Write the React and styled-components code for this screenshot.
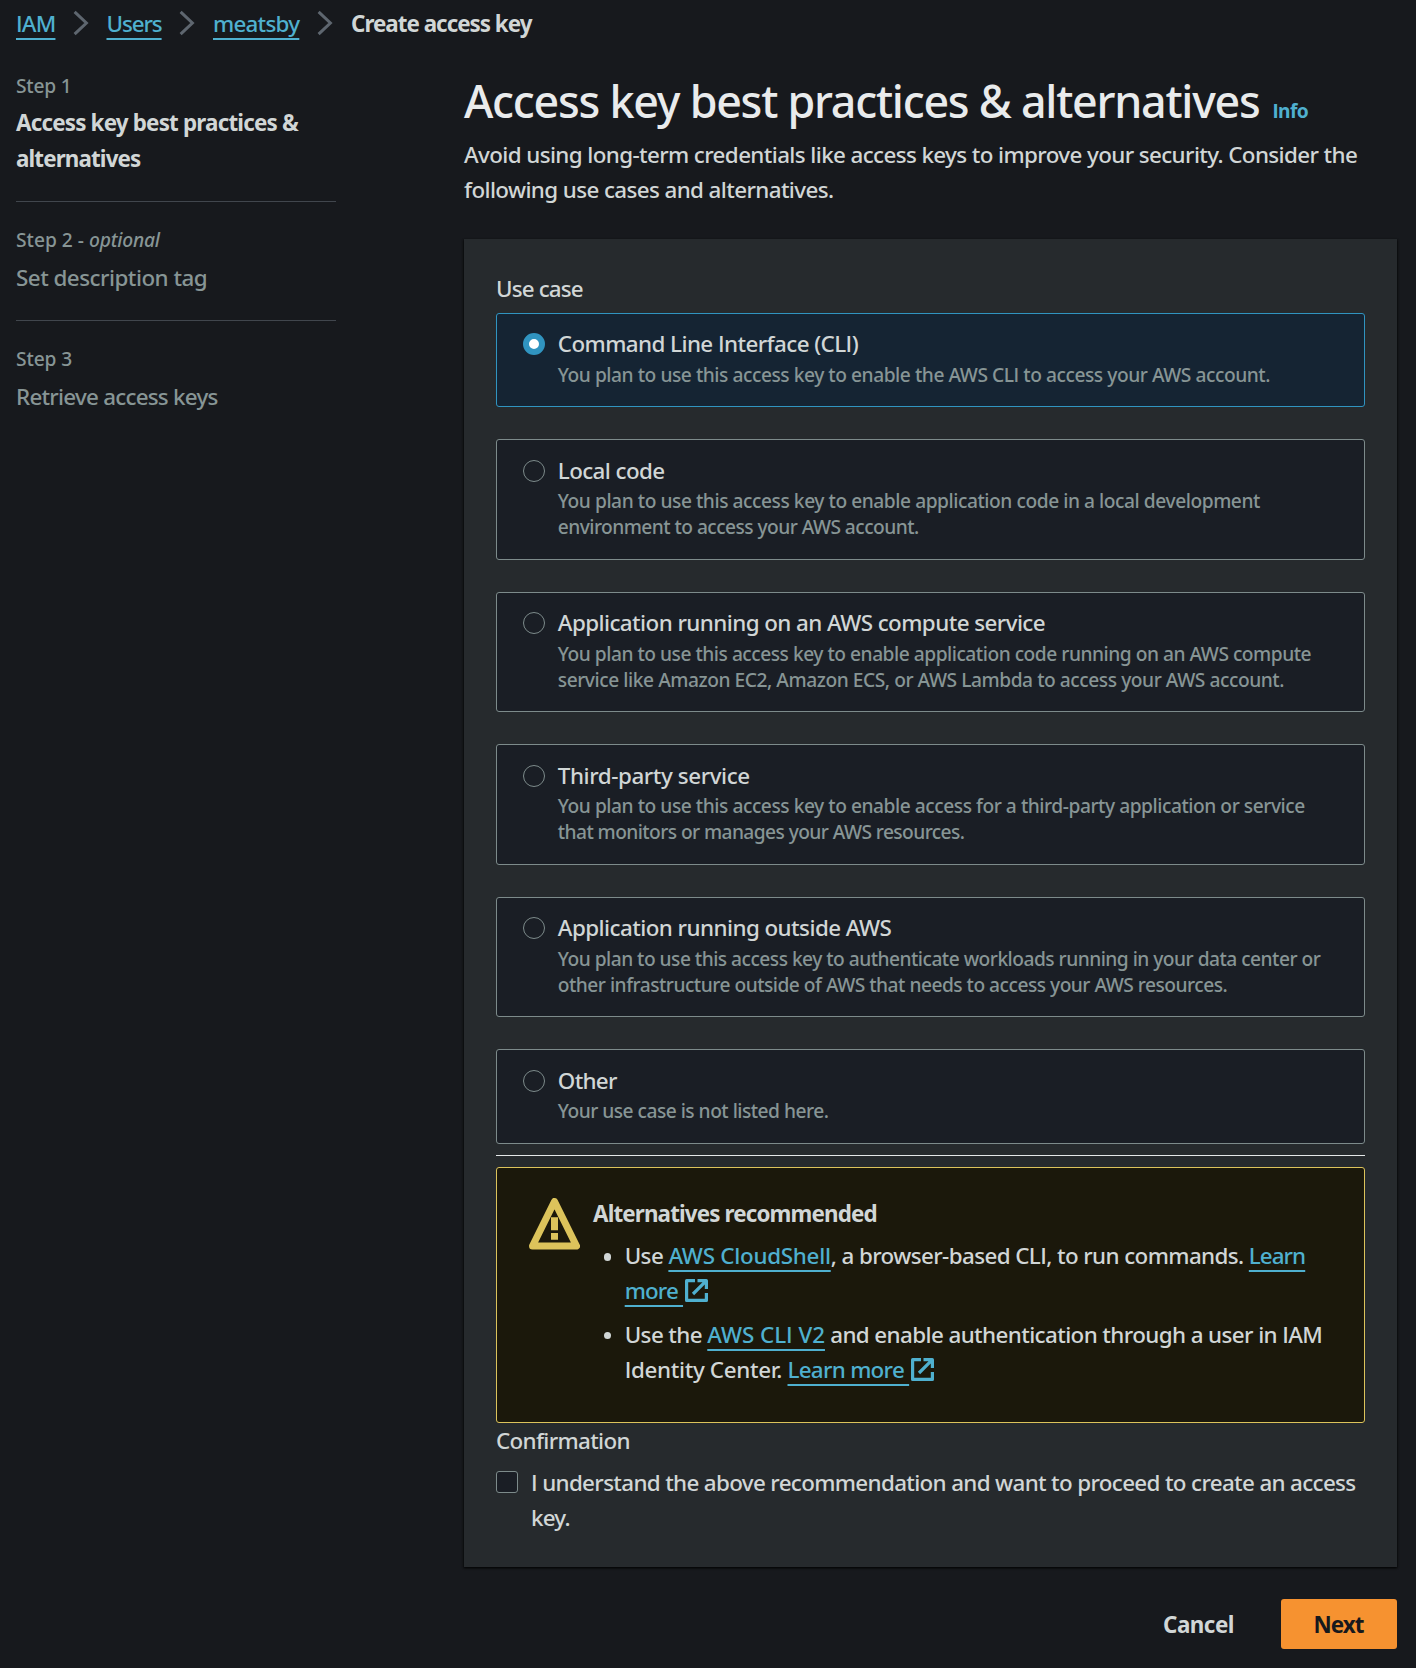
import React, { useState } from 'react';
import styled, { createGlobalStyle } from 'styled-components';

const color = {
  page: '#17191d',
  container: '#262a2d',
  control: '#1a1e25',
  selected: '#152433',
  accent: '#3094c0',
  link: '#4fb0cf',
  text: '#d1d6d6',
  heading: '#e9ebec',
  muted: '#879595',
  border: '#7d8b8b',
  divider: '#41464d',
  chevron: '#5e666f',
  warning: '#dcc35b',
  warningBg: '#1b180b',
  primary: '#f69230',
};

const GlobalStyle = createGlobalStyle`
  * { box-sizing: border-box; }
  body {
    margin: 0;
    background: ${color.page};
    color: ${color.text};
    font-family: "Noto Sans", "Open Sans", sans-serif;
    font-feature-settings: "ss04";
    font-size: 22.4px;
    font-weight: 500;
    line-height: 35.2px;
    -webkit-font-smoothing: antialiased;
  }
`;

const Page = styled.div`
  width: 1416px;
  min-height: 1668px;
  padding: 6.3px 19px 0 16px;
`;

const T = styled.span`
  letter-spacing: ${(p) => p.$ls}px;
  white-space: nowrap;
`;

const Line = styled(T)`
  display: block;
`;

const Link = styled.a`
  color: ${color.link};
  text-decoration: underline;
  text-decoration-thickness: 2px;
  text-underline-offset: 6px;
  text-decoration-skip-ink: none;
  letter-spacing: ${(p) => p.$ls}px;
  white-space: nowrap;
  cursor: pointer;
`;

const Breadcrumbs = styled.nav`
  display: flex;
  align-items: center;
  height: 35.2px;
`;

const Crumb = styled.span`
  display: flex;
  width: ${(p) => p.$w}px;
`;

const ChevronIcon = styled.svg`
  width: 16px;
  height: 26px;
  margin: 0 ${(p) => p.$r}px 1.4px 17px;
  fill: none;
  stroke: ${color.chevron};
  stroke-width: 3;
`;

const Columns = styled.div`
  display: grid;
  grid-template-columns: 320px 933px;
  column-gap: 128px;
`;

const Steps = styled.ol`
  list-style: none;
  margin: 0;
  padding: 31.6px 0 0;
`;

const Step = styled.li`
  padding-bottom: 25.4px;
  & + & {
    border-top: 1px solid ${color.divider};
    padding-top: 25px;
  }
`;

const StepLabel = styled.div`
  font-size: 19.2px;
  line-height: 25.6px;
  color: ${color.muted};
  margin-bottom: 6.8px;
`;

const StepTitle = styled.div`
  font-weight: ${(p) => (p.$active ? 700 : 500)};
  color: ${(p) => (p.$active ? color.text : color.muted)};
`;

const Main = styled.main`
  padding-top: 32px;
`;

const Header = styled.header`
  margin-bottom: 31.6px;
`;

const Title = styled.h1`
  margin: 0;
  height: 63.4px;
  font-size: 44.8px;
  line-height: 56px;
  font-weight: 500;
  color: ${color.heading};
  display: flex;
  align-items: baseline;
`;

const InfoLink = styled.a`
  margin-left: 13px;
  font-size: 19.2px;
  line-height: 24px;
  font-weight: 700;
  letter-spacing: -0.6px;
  color: ${color.link};
`;

const Container = styled.section`
  height: 1328px;
  padding: 31.7px 32px 0;
  background: ${color.container};
  box-shadow: 0 1px 2px rgba(0, 0, 0, 0.6), 1px 1px 2px rgba(0, 0, 0, 0.35), -1px 1px 2px rgba(0, 0, 0, 0.35);
`;

const FieldLabel = styled.div``;

const Tiles = styled.div`
  display: flex;
  flex-direction: column;
  gap: 32px;
  margin-top: 7px;
`;

const Tile = styled.label`
  display: flex;
  gap: 12.4px;
  height: ${(p) => (p.$lines > 1 ? 120.5 : 94.5)}px;
  padding: 12.5px 26px 0;
  border: 1px solid ${(p) => (p.$selected ? color.accent : color.border)};
  border-radius: 3px;
  background: ${(p) => (p.$selected ? color.selected : color.control)};
  cursor: pointer;
`;

const Radio = styled.span`
  flex: none;
  width: 22.4px;
  height: 22.4px;
  margin-top: 6.8px;
  border-radius: 50%;
  border: ${(p) => (p.$selected ? `6.7px solid ${color.accent}` : `1.6px solid ${color.border}`)};
  background: ${(p) => (p.$selected ? '#fff' : color.control)};
`;

const TileDescription = styled.div`
  margin-top: 0.5px;
  font-size: 19.2px;
  line-height: 25.6px;
  color: ${color.muted};
`;

const Rule = styled.hr`
  height: 1px;
  margin: 11px 0;
  border: 0;
  background: #e4e7e8;
`;

const Alert = styled.div`
  display: flex;
  height: 256px;
  padding: 27.8px 31px 0 32px;
  border: 1px solid ${color.warning};
  border-radius: 3px;
  background: ${color.warningBg};
`;

const WarningIcon = styled.svg`
  flex: none;
  width: 51px;
  height: 52px;
  margin: 2.2px 13px 0 0;
`;

const AlertTitle = styled.div`
  font-weight: 700;
`;

const AlertList = styled.ul`
  list-style: none;
  margin: 7px 0 0;
  padding: 0 0 0 10.5px;
  display: flex;
  flex-direction: column;
  gap: 8.4px;
`;

const AlertItem = styled.li`
  display: flex;
  gap: 13.8px;
`;

const Bullet = styled.span`
  flex: none;
  width: 7.4px;
  height: 7.4px;
  margin-top: 15.4px;
  border-radius: 50%;
  background: ${color.text};
`;

const ExternalIcon = styled.svg`
  width: 23px;
  height: 23px;
  margin-left: 2.3px;
  vertical-align: -3px;
  fill: none;
  stroke: ${color.link};
  stroke-width: 3.2;
`;

const CheckRow = styled.label`
  display: flex;
  gap: 13px;
  margin-top: 6.8px;
  cursor: pointer;
`;

const Checkbox = styled.span`
  flex: none;
  width: 22px;
  height: 22px;
  margin-top: 6.1px;
  border: 1.6px solid ${color.border};
  border-radius: 3px;
  background: ${color.control};
`;

const Actions = styled.footer`
  display: flex;
  justify-content: flex-end;
  padding-top: 32px;
`;

const Button = styled.button`
  height: 50px;
  width: ${(p) => p.$w}px;
  padding: 2px 1px 0 0;
  border: 0;
  border-radius: 3px;
  background: ${(p) => (p.$primary ? color.primary : 'transparent')};
  color: ${(p) => (p.$primary ? '#17191d' : color.text)};
  font: inherit;
  font-weight: 700;
  letter-spacing: ${(p) => p.$ls}px;
`;

const Chevron = ({ r }) => (
  <ChevronIcon viewBox="0 0 16 26" $r={r}>
    <path d="M1.6 1.8 13.4 13 1.6 24.2" />
  </ChevronIcon>
);

const External = () => (
  <ExternalIcon viewBox="0 0 23 23">
    <path d="M10 1.7H1.6v19.7h19.8V14M12.5 1.7h8.9V10M21.4 1.7 8 15" strokeLinejoin="round" />
  </ExternalIcon>
);

const USE_CASES = [
  { title: ['Command Line Interface (CLI)', -0.575], lines: [['You plan to use this access key to enable the AWS CLI to access your AWS account.', -0.46]] },
  { title: ['Local code', -0.6], lines: [['You plan to use this access key to enable application code in a local development', -0.455], ['environment to access your AWS account.', -0.555]] },
  { title: ['Application running on an AWS compute service', -0.571], lines: [['You plan to use this access key to enable application code running on an AWS compute', -0.488], ['service like Amazon EC2, Amazon ECS, or AWS Lambda to access your AWS account.', -0.455]] },
  { title: ['Third-party service', -0.427], lines: [['You plan to use this access key to enable access for a third-party application or service', -0.463], ['that monitors or manages your AWS resources.', -0.586]] },
  { title: ['Application running outside AWS', -0.559], lines: [['You plan to use this access key to authenticate workloads running in your data center or', -0.525], ['other infrastructure outside of AWS that needs to access your AWS resources.', -0.51]] },
  { title: ['Other', -0.7], lines: [['Your use case is not listed here.', -0.52]] },
];

export default function App() {
  const [selected, setSelected] = useState(0);
  return (
    <>
      <GlobalStyle />
      <Page>
        <Breadcrumbs>
          <Crumb $w={39.7}><Link $ls={-0.8}>IAM</Link></Crumb>
          <Chevron r={17.8} />
          <Crumb $w={55.5}><Link $ls={-1.1}>Users</Link></Crumb>
          <Chevron r={18} />
          <Crumb $w={86.7}><Link $ls={-0.75}>meatsby</Link></Crumb>
          <Chevron r={18.4} />
          <T as="b" $ls={-1}>Create access key</T>
        </Breadcrumbs>
        <Columns>
          <Steps>
            <Step>
              <StepLabel><T $ls={-0.2}>Step 1</T></StepLabel>
              <StepTitle $active>
                <Line $ls={-0.81}>Access key best practices &amp;</Line>
                <Line $ls={-0.88}>alternatives</Line>
              </StepTitle>
            </Step>
            <Step>
              <StepLabel><T $ls={0}>Step 2 - </T><T as="i" $ls={-0.2}>optional</T></StepLabel>
              <StepTitle><T $ls={-0.52}>Set description tag</T></StepTitle>
            </Step>
            <Step>
              <StepLabel><T $ls={-0.1}>Step 3</T></StepLabel>
              <StepTitle><T $ls={-0.76}>Retrieve access keys</T></StepTitle>
            </Step>
          </Steps>
          <Main>
            <Header>
              <Title>
                <T $ls={-1.251}>Access key best practices &amp; alternatives</T>
                <InfoLink>Info</InfoLink>
              </Title>
              <Line $ls={-0.615}>Avoid using long-term credentials like access keys to improve your security. Consider the</Line>
              <Line $ls={-0.611}>following use cases and alternatives.</Line>
            </Header>
            <Container>
              <FieldLabel><T $ls={-0.86}>Use case</T></FieldLabel>
              <Tiles>
                {USE_CASES.map(({ title, lines }, i) => (
                  <Tile key={title[0]} $selected={i === selected} $lines={lines.length} onClick={() => setSelected(i)}>
                    <Radio $selected={i === selected} />
                    <div>
                      <Line $ls={title[1]}>{title[0]}</Line>
                      <TileDescription>
                        {lines.map(([text, ls]) => <Line key={text} $ls={ls}>{text}</Line>)}
                      </TileDescription>
                    </div>
                  </Tile>
                ))}
              </Tiles>
              <Rule />
              <Alert>
                <WarningIcon viewBox="0 0 51 52">
                  <path d="M25.5 3.5 47.5 48H3.5Z" fill="none" stroke={color.warning} strokeWidth="7" strokeLinejoin="round" />
                  <path d="M22 19.3h7v13h-7zM22 35h7v6.7h-7z" fill={color.warning} />
                </WarningIcon>
                <div>
                  <AlertTitle><T $ls={-0.866}>Alternatives recommended</T></AlertTitle>
                  <AlertList>
                    <AlertItem>
                      <Bullet />
                      <div>
                        <Line $ls={-0.6}>Use <Link $ls={-0.27}>AWS CloudShell</Link>, a browser-based CLI, to run commands. <Link $ls={-0.95}>Learn</Link></Line>
                        <Line $ls={-0.8}><Link $ls={-0.85}>more </Link><External /></Line>
                      </div>
                    </AlertItem>
                    <AlertItem>
                      <Bullet />
                      <div>
                        <Line $ls={-0.6}>Use the <Link $ls={-0.05}>AWS CLI V2</Link> and enable authentication through a user in IAM</Line>
                        <Line $ls={-0.34}>Identity Center. <Link $ls={-0.72}>Learn more </Link><External /></Line>
                      </div>
                    </AlertItem>
                  </AlertList>
                </div>
              </Alert>
              <FieldLabel><T $ls={-0.658}>Confirmation</T></FieldLabel>
              <CheckRow>
                <Checkbox />
                <div>
                  <Line $ls={-0.657}>I understand the above recommendation and want to proceed to create an access</Line>
                  <Line $ls={-0.8}>key.</Line>
                </div>
              </CheckRow>
            </Container>
            <Actions>
              <Button $w={164} $ls={-0.5}>Cancel</Button>
              <Button $primary $w={116} $ls={-0.922}>Next</Button>
            </Actions>
          </Main>
        </Columns>
      </Page>
    </>
  );
}
